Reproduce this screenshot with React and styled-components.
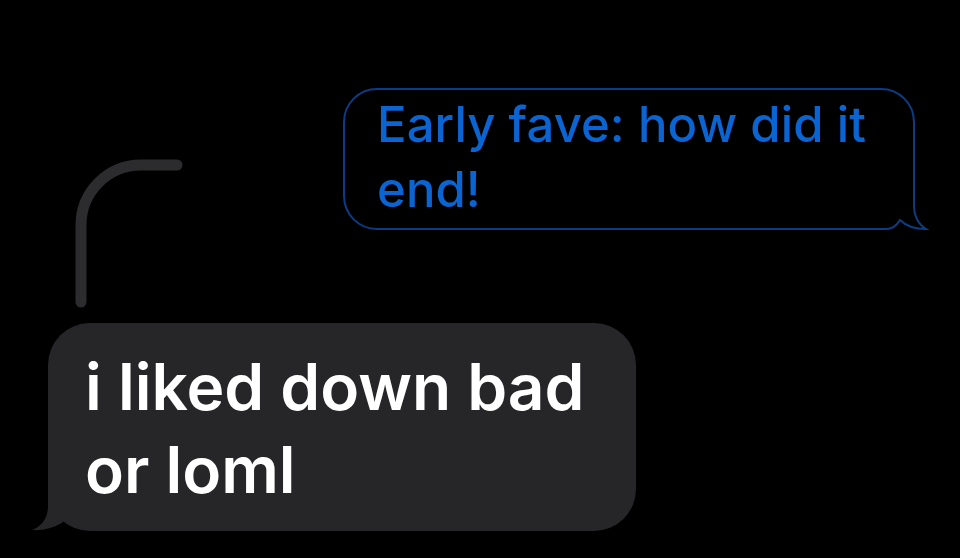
import React from "react";
import styled, { createGlobalStyle } from "styled-components";

const GlobalStyle = createGlobalStyle`
    html, body {
        margin: 0;
        padding: 0;
        background: #000;
    }
`;

const Page = styled.div`
    width: 960px;
    height: 558px;
    box-sizing: border-box;
    padding: 88px 45px 0 48px;
    display: flex;
    flex-direction: column;
    background: #000;
    font-family: Inter, "Noto Sans", "Liberation Sans", sans-serif;
    overflow: hidden;
`;

const TopRow = styled.div`
    display: flex;
    align-items: flex-start;
    justify-content: space-between;
`;

const Connector = styled.svg`
    display: block;
    margin-top: 71px;
    margin-left: 27px;
    flex-shrink: 0;
`;

const QuotedBubble = styled.div`
    position: relative;
    width: 572px;
    box-sizing: border-box;
    padding: 2px 20px 6px 32px;
    border: 2px solid #0c3c82;
    border-radius: 34px;
    color: #0a64d2;
    font-size: 49px;
    font-weight: 500;
    line-height: 65px;
    letter-spacing: 0.1px;
`;

const Tail = styled.svg`
    position: absolute;
    display: block;
    right: ${p => p.$right}px;
    left: ${p => p.$left}px;
    bottom: ${p => p.$bottom}px;
`;

const Text = styled.span`
    position: relative;
    z-index: 1;
`;

const ReplyBubble = styled.div`
    position: relative;
    align-self: flex-start;
    margin-top: 15px;
    width: 588px;
    box-sizing: border-box;
    padding: 22px 20px 20px 37px;
    border-radius: 42px;
    background: #262629;
    color: #fff;
    font-size: 64px;
    font-weight: 600;
    line-height: 83px;
    letter-spacing: 0;
`;

export default function App() {
    return (
        <>
            <GlobalStyle />
            <Page>
                <TopRow>
                    <Connector width="108" height="149" viewBox="0 0 108 149">
                        <path
                            d="M6 143 L6 66 A60 60 0 0 1 66 6 L102 6"
                            fill="none"
                            stroke="#2c2c2e"
                            strokeWidth="11"
                            strokeLinecap="round"
                        />
                    </Connector>
                    <QuotedBubble>
                        <Text>Early fave: how did it end!</Text>
                        <Tail $right={-19} $bottom={-5} width="56" height="43" viewBox="0 0 56 43">
                            <rect x="3" y="3" width="37" height="38" fill="#000" />
                            <path
                                d="M2 39 L10 39 C16 39 21 35 24 30 C30 36 39 39 50 39 C42 34 38 26 38 15 L38 2"
                                fill="none"
                                stroke="#0c3c82"
                                strokeWidth="2"
                            />
                        </Tail>
                    </QuotedBubble>
                </TopRow>
                <ReplyBubble>
                    <Text>i liked down bad or loml</Text>
                    <Tail $left={-18} $bottom={0} width="44" height="50" viewBox="0 0 44 50">
                        <path
                            d="M18 0 L18 25 C18 37 12 45 2 49 C14 50 28 46 37 38 L44 30 L44 0 Z"
                            fill="#262629"
                        />
                    </Tail>
                </ReplyBubble>
            </Page>
        </>
    );
}
